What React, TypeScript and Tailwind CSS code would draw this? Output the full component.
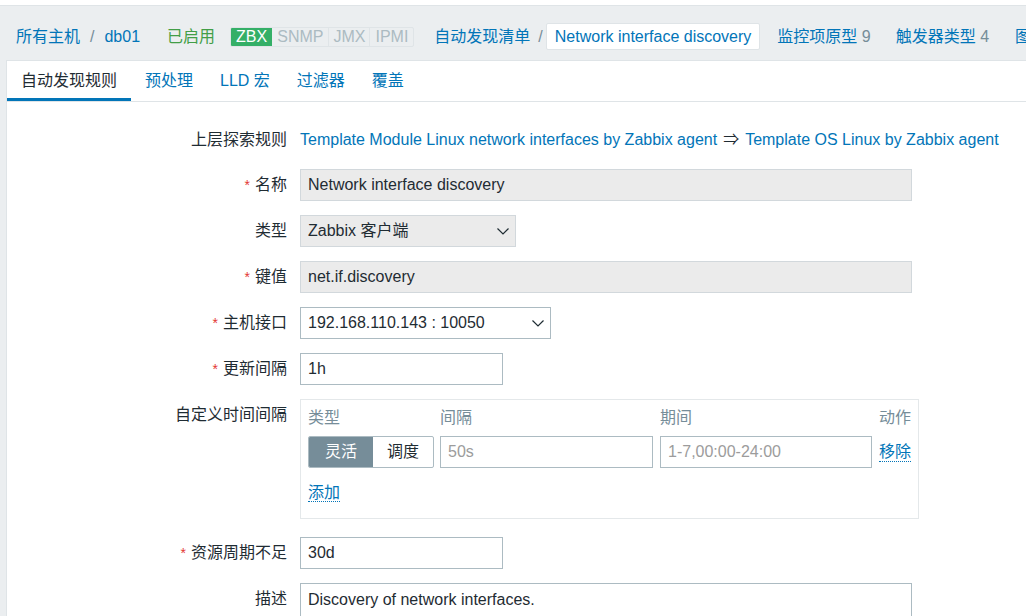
import { ReactNode } from "react";

function Chevron() {
  return (
    <svg width="12" height="7" viewBox="0 0 12 7" className="shrink-0">
      <polyline points="0.5,0.5 6,6 11.5,0.5" fill="none" stroke="#1f2c33" strokeWidth="1.2" />
    </svg>
  );
}

function Required() {
  return <span className="text-[#e33734] mr-[5px] text-[14px]">*</span>;
}

function Row({
  label,
  required,
  top,
  children,
  className = "",
}: {
  label: string;
  required?: boolean;
  top?: boolean;
  children: ReactNode;
  className?: string;
}) {
  return (
    <div className={`flex ${top ? "items-start" : "items-center"} ${className}`}>
      <div
        className={`w-[280px] shrink-0 text-right text-[#1f2c33] ${top ? "pt-[6px]" : ""}`}
      >
        {required && <Required />}
        {label}
      </div>
      <div className="ml-[13px] min-w-0">{children}</div>
    </div>
  );
}

function ReadOnly({ value, width }: { value: string; width: string }) {
  return (
    <div
      className={`${width} h-[32px] flex items-center px-[7px] bg-[#ebebeb] border border-[#d2d8dc] text-[#1f2c33]`}
    >
      {value}
    </div>
  );
}

function TextBox({ value, width, placeholder }: { value?: string; width: string; placeholder?: string }) {
  return (
    <div
      className={`${width} h-[32px] flex items-center px-[7px] bg-white border border-[#acbbc2] ${
        value ? "text-[#1f2c33]" : "text-[#9c9c9c]"
      }`}
    >
      {value ?? placeholder}
    </div>
  );
}

export default function App() {
  return (
    <div className="w-[1026px] h-[616px] overflow-hidden bg-[#ebeef0] text-[16px] leading-[20px] font-['Liberation_Sans','Noto_Sans_CJK_SC',sans-serif]">
      <div className="h-[6px] bg-white border-b border-[#dfe4e7]" />

      <nav className="h-[54px] flex items-center pl-[16px] pt-[7px] whitespace-nowrap overflow-hidden">
        <a className="shrink-0 text-[#0275b8]">所有主机</a>
        <span className="shrink-0 mx-[10px] text-[#768d99]">/</span>
        <a className="shrink-0 text-[#0275b8]">db01</a>
        <span className="shrink-0 ml-[27px] text-[#429e47]">已启用</span>
        <div className="shrink-0 ml-[15px] flex h-[20px] border border-[#dfe4e7] rounded-[2px] overflow-hidden text-[16px] leading-[18px]">
          <span className="bg-[#34af67] text-white px-[5px]">ZBX</span>
          <span className="text-[#acbbc2] px-[5px] border-r border-[#dfe4e7]">SNMP</span>
          <span className="text-[#acbbc2] px-[4px] border-r border-[#dfe4e7]">JMX</span>
          <span className="text-[#acbbc2] px-[5px]">IPMI</span>
        </div>
        <a className="shrink-0 ml-[20px] text-[#0275b8]">自动发现清单</a>
        <span className="shrink-0 ml-[8px] mr-[3px] text-[#768d99]">/</span>
        <span className="shrink-0 h-[27px] flex items-center px-[8px] bg-white border border-[#dfe4e7] rounded-[2px] text-[#0275b8]">
          Network interface discovery
        </span>
        <a className="shrink-0 ml-[17px] text-[#0275b8]">
          监控项原型<span className="text-[#768d99]"> 9</span>
        </a>
        <a className="shrink-0 ml-[25px] text-[#0275b8]">
          触发器类型<span className="text-[#768d99]"> 4</span>
        </a>
        <a className="shrink-0 ml-[26px] text-[#0275b8]">图形原型</a>
      </nav>

      <main className="ml-[6px] h-[556px] bg-white border-l border-t border-[#dfe4e7]">
        <div className="h-[41px] flex items-stretch border-b border-[#dfe4e7] whitespace-nowrap">
          <div className="px-[14px] flex items-center text-[#1f2c33] border-b-[3px] border-[#0275b8] pt-[3px]">
            自动发现规则
          </div>
          <div className="px-[14px] flex items-center text-[#0275b8]">预处理</div>
          <div className="px-[13px] flex items-center text-[#0275b8]">LLD 宏</div>
          <div className="px-[14px] flex items-center text-[#0275b8]">过滤器</div>
          <div className="px-[13px] flex items-center text-[#0275b8]">覆盖</div>
        </div>

        <div className="pt-[23px] flex flex-col gap-[14px]">
          <Row label="上层探索规则">
            <div className="h-[30px] flex items-center whitespace-nowrap">
              <a className="text-[#0275b8]">Template Module Linux network interfaces by Zabbix agent</a>
              <span className="mx-[6px] text-[#1f2c33]">⇒</span>
              <a className="text-[#0275b8]">Template OS Linux by Zabbix agent</a>
            </div>
          </Row>

          <Row label="名称" required>
            <ReadOnly value="Network interface discovery" width="w-[612px]" />
          </Row>

          <Row label="类型">
            <div className="w-[216px] h-[32px] flex items-center justify-between pl-[7px] pr-[6px] bg-[#ebebeb] border border-[#d2d8dc] text-[#1f2c33]">
              Zabbix 客户端
              <Chevron />
            </div>
          </Row>

          <Row label="键值" required>
            <ReadOnly value="net.if.discovery" width="w-[612px]" />
          </Row>

          <Row label="主机接口" required>
            <div className="w-[251px] h-[32px] flex items-center justify-between pl-[7px] pr-[6px] bg-white border border-[#acbbc2] text-[#1f2c33]">
              192.168.110.143 : 10050
              <Chevron />
            </div>
          </Row>

          <Row label="更新间隔" required>
            <TextBox value="1h" width="w-[203px]" />
          </Row>

          <Row label="自定义时间间隔" top className="mb-[4px]">
            <div className="w-[619px] h-[120px] border border-[#e4e8ea] px-[7px] pt-[7px]">
              <div className="flex h-[22px] items-center text-[#768d99]">
                <span className="w-[132px]">类型</span>
                <span className="w-[220px]">间隔</span>
                <span className="w-[219px]">期间</span>
                <span>动作</span>
              </div>
              <div className="mt-[7px] flex items-center">
                <div className="w-[126px] h-[32px] flex border border-[#acbbc2] rounded-[2px] overflow-hidden">
                  <span className="w-[64px] flex items-center justify-center bg-[#768d99] text-white">灵活</span>
                  <span className="flex-1 flex items-center justify-center text-[#1f2c33]">调度</span>
                </div>
                <div className="ml-[6px]">
                  <TextBox placeholder="50s" width="w-[213px]" />
                </div>
                <div className="ml-[7px]">
                  <TextBox placeholder="1-7,00:00-24:00" width="w-[212px]" />
                </div>
                <a className="ml-[7px] text-[#0275b8] border-b border-dotted border-[#0275b8] leading-[19px]">
                  移除
                </a>
              </div>
              <div className="mt-[15px]">
                <a className="text-[#0275b8] border-b border-dotted border-[#0275b8] leading-[19px]">添加</a>
              </div>
            </div>
          </Row>

          <Row label="资源周期不足" required>
            <TextBox value="30d" width="w-[203px]" />
          </Row>

          <Row label="描述" top>
            <div className="w-[612px] h-[60px] px-[7px] pt-[6px] bg-white border border-[#acbbc2] text-[#1f2c33]">
              Discovery of network interfaces.
            </div>
          </Row>
        </div>
      </main>
    </div>
  );
}
